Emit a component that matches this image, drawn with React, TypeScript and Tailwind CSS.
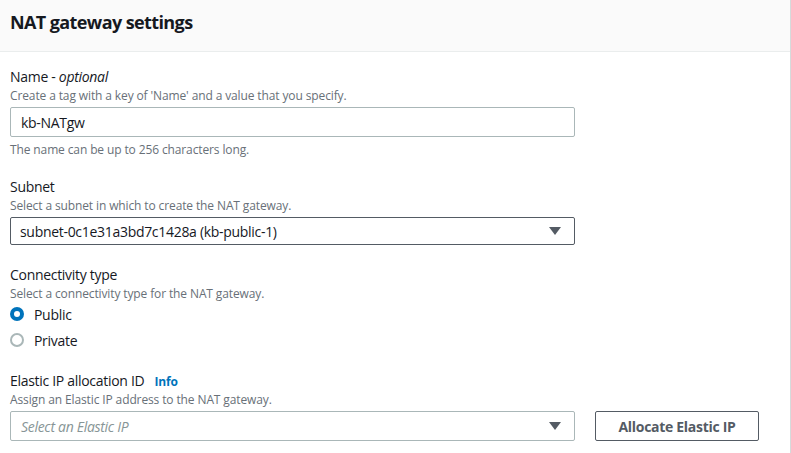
import { ReactNode } from "react";

function Caret() {
  return (
    <svg width="12" height="8" viewBox="0 0 12 8" className="shrink-0">
      <path d="M0 0h12L6 8z" fill="#545b64" />
    </svg>
  );
}

function Label({ children }: { children: ReactNode }) {
  return (
    <div className="text-[14px] leading-[22px] tracking-[-0.3px] text-[#16191f]">
      {children}
    </div>
  );
}

function Desc({ children }: { children: ReactNode }) {
  return (
    <div className="text-[12px] leading-[16px] tracking-[-0.12px] text-[#687078]">
      {children}
    </div>
  );
}

function Radio({ checked, label }: { checked?: boolean; label: string }) {
  return (
    <div className="flex items-center gap-[10px] h-[26px]">
      {checked ? (
        <span className="w-[14px] h-[14px] rounded-full bg-[#0073bb] flex items-center justify-center">
          <span className="w-[6px] h-[6px] rounded-full bg-white" />
        </span>
      ) : (
        <span className="w-[14px] h-[14px] rounded-full border-2 border-[#aab7b8]" />
      )}
      <span className="text-[14px] tracking-[-0.3px] text-[#16191f]">{label}</span>
    </div>
  );
}

export default function App() {
  return (
    <div
      className="w-[791px] h-[453px] bg-white border-r border-[#d5dbdb] overflow-hidden"
      style={{ fontFamily: '"Open Sans", "Noto Sans", Arial, sans-serif' }}
    >
      <div className="h-[52px] bg-[#fafafa] border-b border-[#eaeded] px-[10px] flex items-center">
        <h2 className="text-[18px] font-bold tracking-[-0.6px] text-[#16191f] -mt-[6px]">
          NAT gateway settings
        </h2>
      </div>

      <div className="px-[10px] pt-[14px] flex flex-col">
        {/* Name */}
        <Label>
          Name - <i>optional</i>
        </Label>
        <Desc>Create a tag with a key of 'Name' and a value that you specify.</Desc>
        <div className="mt-[3px] w-[565px] h-[30px] border border-[#aab7b8] rounded-[2px] px-[10px] flex items-center text-[14px] tracking-[-0.3px] text-[#16191f]">
          kb-NATgw
        </div>
        <div className="mt-[5px]">
          <Desc>The name can be up to 256 characters long.</Desc>
        </div>

        {/* Subnet */}
        <div className="mt-[18px]">
          <Label>Subnet</Label>
        </div>
        <Desc>Select a subnet in which to create the NAT gateway.</Desc>
        <div className="mt-[3px] w-[565px] h-[28px] border border-[#545b64] rounded-[2px] pl-[9px] pr-[13px] flex items-center justify-between text-[14px] tracking-[-0.3px] text-[#16191f]">
          <span>subnet-0c1e31a3bd7c1428a (kb-public-1)</span>
          <Caret />
        </div>

        {/* Connectivity type */}
        <div className="mt-[19px]">
          <Label>Connectivity type</Label>
        </div>
        <Desc>Select a connectivity type for the NAT gateway.</Desc>
        <div className="-mt-[1px]">
          <Radio checked label="Public" />
          <Radio label="Private" />
        </div>

        {/* Elastic IP */}
        <div className="mt-[17px] flex items-baseline gap-[10px] h-[22px]">
          <Label>Elastic IP allocation ID</Label>
          <span className="text-[12px] font-bold tracking-[-0.1px] text-[#0073bb]">Info</span>
        </div>
        <Desc>Assign an Elastic IP address to the NAT gateway.</Desc>
        <div className="mt-[3px] flex items-center gap-[20px]">
          <div className="w-[565px] h-[30px] border border-[#aab7b8] rounded-[2px] pl-[10px] pr-[13px] flex items-center justify-between text-[14px] italic tracking-[-0.3px] text-[#879596]">
            <span>Select an Elastic IP</span>
            <Caret />
          </div>
          <button className="w-[164px] h-[30px] border border-[#545b64] rounded-[2px] text-[14px] font-bold tracking-[-0.3px] text-[#545b64]">
            Allocate Elastic IP
          </button>
        </div>
      </div>
    </div>
  );
}
